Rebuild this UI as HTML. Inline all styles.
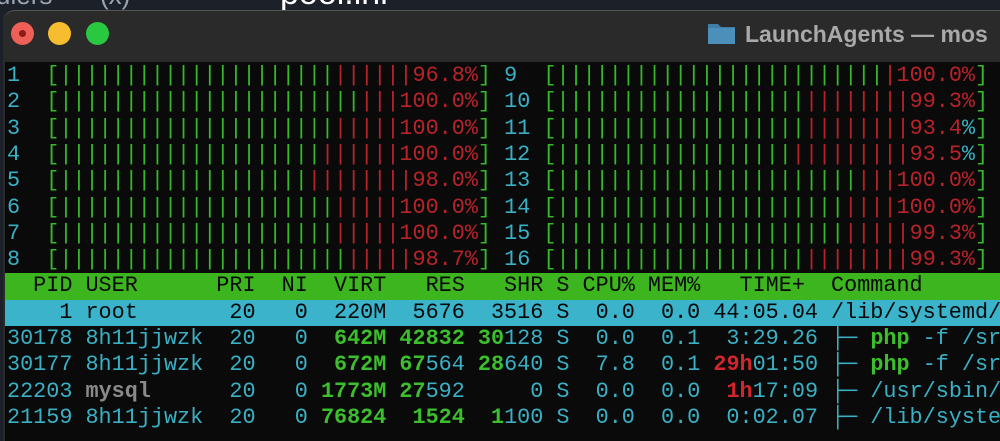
<!DOCTYPE html>
<html><head><meta charset="utf-8"><style>
html,body{margin:0;padding:0;width:1000px;height:427px;overflow:hidden;background:#1b2029;}
.top{position:absolute;left:0;top:0;width:1000px;height:12px;background:#1b2029;overflow:hidden;}
.top span{position:absolute;top:-20px;font-family:"Liberation Sans",sans-serif;color:#9aa3b0;font-size:26px;}
.win{position:absolute;left:3px;top:10px;width:1010px;height:430px;background:#2a2a2a;border-radius:12px 0 0 0;border-top:1px solid #555;overflow:hidden;}
.dot{position:absolute;top:11px;width:23px;height:23px;border-radius:50%;}
.title{position:absolute;left:742px;top:11px;font-family:"Liberation Sans",sans-serif;font-weight:bold;font-size:23px;color:#a9a9a9;white-space:nowrap;line-height:24px;}
.term{position:absolute;left:2px;top:51px;width:1000px;height:380px;background:#0a0a0a;}
pre{position:absolute;left:2px;margin:0;font-family:"Liberation Mono",monospace;font-size:21.8px;line-height:26.3px;height:26.3px;white-space:pre;color:#3ab0c4;}
.g{color:#35b82a}.r{color:#b8232a}.c{color:#3ab0c4}.gb{color:#3cbf2c;font-weight:bold}.rb{color:#d0262c;font-weight:bold}.m{color:#8a8a8a;font-weight:bold}
.hdr{background:#3db51f;color:#0a0a0a;width:1000px;left:0;padding-left:2px}
.sel{background:#3ab3cb;color:#0a0a0a;width:1000px;left:0;padding-left:2px}
</style></head><body>
<div class="top"><span style="left:-4px">ulers</span><span style="left:100px">(x)</span><span style="left:280px;color:#fff;font-size:34px;top:-26px">pool.ini</span></div>
<div class="win">
<div class="dot" style="left:8px;background:#ee5f57"><div style="position:absolute;left:8px;top:8px;width:7px;height:7px;border-radius:50%;background:#8c1b14"></div></div>
<div class="dot" style="left:45px;background:#f6be2f"></div>
<div class="dot" style="left:83px;background:#2ac840"></div>
<svg style="position:absolute;left:704px;top:10px" width="29" height="24" viewBox="0 0 29 24"><path d="M1 3h10l3 3h14v17H1z" fill="#3d7fa6"/><path d="M1 7h27v16H1z" fill="#4b8fba"/></svg>
<div class="title">LaunchAgents — mos</div>
<div class="term">
<pre style="top:1px"><span class="c">1  </span><span class="g">[|||||||||||||||||||||</span><span class="r">||||||96.8%</span><span class="g">]</span> <span class="c">9  </span><span class="g">[|||||||||||||||||||||||||</span><span class="r">|100.0%</span><span class="g">]</span></pre>
<pre style="top:27.3px"><span class="c">2  </span><span class="g">[|||||||||||||||||||||||</span><span class="r">|||100.0%</span><span class="g">]</span> <span class="c">10 </span><span class="g">[|||||||||||||||||||</span><span class="r">||||||||99.3%</span><span class="g">]</span></pre>
<pre style="top:53.6px"><span class="c">3  </span><span class="g">[|||||||||||||||||||||</span><span class="r">|||||100.0%</span><span class="g">]</span> <span class="c">11 </span><span class="g">[|||||||||||||||||||</span><span class="r">||||||||93.4</span><span class="c">%</span><span class="g">]</span></pre>
<pre style="top:79.9px"><span class="c">4  </span><span class="g">[||||||||||||||||||||</span><span class="r">||||||100.0%</span><span class="g">]</span> <span class="c">12 </span><span class="g">[||||||||||||||||||</span><span class="r">|||||||||93.5</span><span class="c">%</span><span class="g">]</span></pre>
<pre style="top:106.2px"><span class="c">5  </span><span class="g">[|||||||||||||||||||</span><span class="r">||||||||98.0%</span><span class="g">]</span> <span class="c">13 </span><span class="g">[|||||||||||||||||||||||</span><span class="r">|||100.0%</span><span class="g">]</span></pre>
<pre style="top:132.5px"><span class="c">6  </span><span class="g">[|||||||||||||||||||||</span><span class="r">|||||100.0%</span><span class="g">]</span> <span class="c">14 </span><span class="g">[||||||||||||||||||||||</span><span class="r">||||100.0%</span><span class="g">]</span></pre>
<pre style="top:158.8px"><span class="c">7  </span><span class="g">[|||||||||||||||||||||</span><span class="r">|||||100.0%</span><span class="g">]</span> <span class="c">15 </span><span class="g">[||||||||||||||||||||||</span><span class="r">|||||99.3%</span><span class="g">]</span></pre>
<pre style="top:185.1px"><span class="c">8  </span><span class="g">[||||||||||||||||||||||</span><span class="r">|||||98.7%</span><span class="g">]</span> <span class="c">16 </span><span class="g">[|||||||||||||||||||</span><span class="r">||||||||99.3%</span><span class="g">]</span></pre>
<pre class="hdr" style="top:211.4px">  PID USER      PRI  NI  VIRT   RES   SHR S CPU% MEM%   TIME+  Command</pre>
<pre class="sel" style="top:237.7px">    1 root       20   0  220M  5676  3516 S  0.0  0.0 44:05.04 /lib/systemd/</pre>
<pre style="top:264px">30178 8h11jjwzk  20   0  <span class="gb">642M 42832 30</span>128 S  0.0  0.1  3:29.26 ├─ <span class="gb">php</span> -f /sr</pre>
<pre style="top:290.3px">30177 8h11jjwzk  20   0  <span class="gb">672M 67</span>564 <span class="gb">28</span>640 S  7.8  0.1 <span class="rb">29h</span>01:50 ├─ <span class="gb">php</span> -f /sr</pre>
<pre style="top:316.6px">22203 <span class="m">mysql</span>      20   0 <span class="gb">1773M 27</span>592     0 S  0.0  0.0  <span class="rb">1h</span>17:09 ├─ /usr/sbin/</pre>
<pre style="top:342.9px">21159 8h11jjwzk  20   0 <span class="gb">76824  1524  1</span>100 S  0.0  0.0  0:02.07 ├─ /lib/syste</pre>
</div>
</div>
</body></html>
